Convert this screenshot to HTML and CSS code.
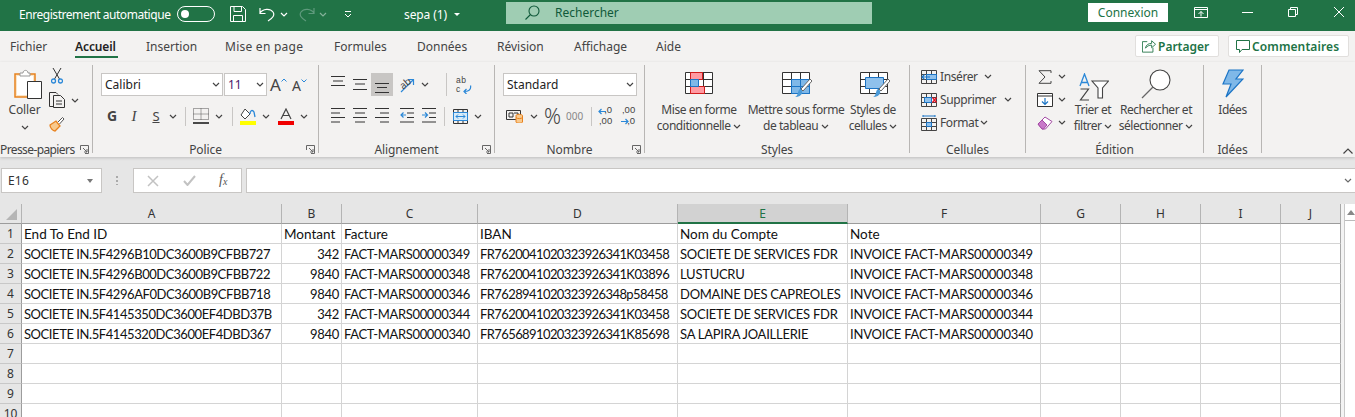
FILE: index.html
```html
<!DOCTYPE html>
<html lang="fr">
<head>
<meta charset="utf-8">
<title>sepa (1) - Excel</title>
<link rel="stylesheet" href="styles.css">
</head>
<body>
<svg class="defs" width="0" height="0" aria-hidden="true">
  <symbol id="c" viewBox="0 0 8 5"><path d="M1 1l3 3 3-3" fill="none" stroke="#444" stroke-width="1.2"/></symbol>
  <symbol id="launch" viewBox="0 0 9 9"><path d="M.5 5V.5H8.5V8.5H5M3 3l4 4M7 4V7H4" fill="none" stroke="#666"/></symbol>
</svg>

<header class="titlebar">
  <div class="tb-left">
    <span class="autosave">Enregistrement automatique</span>
    <span class="toggle"><span class="knob"></span></span>
    <svg class="ml15" width="16" height="16" viewBox="0 0 16 16"><path d="M.5.5H12.5L15.5 3.5V15.5H.5ZM4 .5V5.5H11.5V.5M3.5 15.5V9.5H12.5V15.5" fill="none" stroke="#fff"/></svg>
    <svg class="ml13" width="16" height="15" viewBox="0 0 16 15"><path d="M1 6C4 1.500 11 1 14 5c2 3 0 6-5 9M1 1V6.500H6.500" fill="none" stroke="#fff" stroke-width="1.200"/></svg>
    <svg class="chev ml5 white"><use href="#c"/></svg>
    <svg class="ml11" width="16" height="15" viewBox="0 0 16 15"><path d="M15 6C12 1.500 5 1 2 5c-2 3 0 6 5 9M15 1V6.500H9.500" fill="none" stroke="#5f9a7d" stroke-width="1.200"/></svg>
    <svg class="chev ml4 dim"><use href="#c"/></svg>
    <svg class="ml17" width="8" height="7" viewBox="0 0 8 7"><path d="M1 .5H7M1 3l3 3 3-3" fill="none" stroke="#fff"/></svg>
    <span class="docname">sepa (1)</span>
    <span class="caret"></span>
  </div>
  <div class="search">
    <svg width="15" height="15" viewBox="0 0 15 15"><circle cx="9" cy="6" r="5" fill="none" stroke="#10593a" stroke-width="1.100"/><path d="M5.500 9.500L.5 14.500" stroke="#10593a" stroke-width="1.100"/></svg>
    <span>Rechercher</span>
  </div>
  <button class="connect">Connexion</button>
  <div class="winctl">
    <svg width="14" height="11" viewBox="0 0 14 11"><path d="M.5.5H13.500V10.500H.5ZM.5 2.500H13.500M7 9.500V4.500M4.500 7L7 4.500 9.500 7" fill="none" stroke="#fff"/></svg>
    <svg class="ml34" width="11" height="1" viewBox="0 0 11 1"><path d="M0 .5H11" stroke="#fff"/></svg>
    <svg class="ml35" width="10" height="10" viewBox="0 0 10 10"><path d="M.5 2.500H7.500V9.500H.5ZM2.500 2.500V.5H9.500V7.500H7.500" fill="none" stroke="#fff"/></svg>
    <svg class="ml36" width="10" height="10" viewBox="0 0 10 10"><path d="M0 0L10 10M10 0L0 10" stroke="#fff"/></svg>
  </div>
</header>

<nav class="tabs">
  <a class="tab t1">Fichier</a>
  <a class="tab t2 active">Accueil</a>
  <a class="tab t3">Insertion</a>
  <a class="tab t4">Mise en page</a>
  <a class="tab t5">Formules</a>
  <a class="tab t6">Données</a>
  <a class="tab t7">Révision</a>
  <a class="tab t8">Affichage</a>
  <a class="tab t9">Aide</a>
  <div class="tab-actions">
    <button class="tabbtn share">
      <svg width="14" height="14" viewBox="0 0 16 15"><path d="M6 2.500H.5V14.500H12.500V9.500M4 10C4.500 6 7.500 4.500 11 4.500V1.500L15.500 5.500 11 9.500V6.500C8.500 6.500 5.500 7.500 4 10Z" fill="none" stroke="#217346"/></svg>
      Partager
    </button>
    <button class="tabbtn comment">
      <svg width="14" height="13" viewBox="0 0 14 13"><path d="M.5.5H13.500V9.500H6L3.500 12.500V9.500H.5Z" fill="none" stroke="#217346"/></svg>
      Commentaires
    </button>
  </div>
</nav>

<section class="ribbon">
  <div class="group g-clip">
    <div class="gbody clip-body">
      <div class="paste">
        <svg width="28" height="30" viewBox="0 0 28 30">
          <path d="M1 5H21V28H1Z" fill="#fbe5c8" stroke="#e8821e" stroke-width="1.500"/>
          <path d="M3 7H19V26H3Z" fill="#fff"/>
          <path d="M6 7V4H9C9 .5 14 .5 14 4H16V7Z" fill="#fff" stroke="#999"/>
          <path d="M13.500 12.500H27.500V29.500H13.500Z" fill="#fff" stroke="#333"/>
        </svg>
        <span class="lbl">Coller</span>
        <svg class="chev mt7"><use href="#c"/></svg>
      </div>
      <div class="clip-tools">
        <svg class="cut" width="12" height="16" viewBox="0 0 12 16"><path d="M2 0L8.500 11M10 0L3.500 11" stroke="#333" fill="none"/><circle cx="2.500" cy="13" r="2" fill="none" stroke="#2b88d8" stroke-width="1.300"/><circle cx="9.500" cy="13" r="2" fill="none" stroke="#2b88d8" stroke-width="1.300"/></svg>
        <div class="copy-row">
          <svg width="16" height="16" viewBox="0 0 16 16"><path d="M4.500 14.500H.5V.5H7L9 2.500M4.500 3.500H11.500L15.500 7.500V15.500H4.500ZM7 9H13M7 12H13" fill="none" stroke="#333"/></svg>
          <svg class="chev ml6"><use href="#c"/></svg>
        </div>
        <svg width="16" height="16" viewBox="0 0 16 16"><path d="M1 9L7 5 11 10 6 15C4 15 1 12 1 9Z" fill="#f8c98d" stroke="#e8821e" stroke-width="1.300"/><path d="M9 6L13.500 1.500 15 3 10.500 8" fill="#fff" stroke="#555"/></svg>
      </div>
    </div>
    <div class="glabel clip-label">Presse-papiers<svg class="launch"><use href="#launch"/></svg></div>
  </div>

  <div class="group g-font">
    <div class="gbody">
      <div class="row r1">
        <div class="combo w122"><span>Calibri</span><svg class="chev"><use href="#c"/></svg></div>
        <div class="combo w43 ml1 violet"><span>11</span><svg class="chev"><use href="#c"/></svg></div>
        <span class="growA ml3">A<svg class="mini" width="6" height="4" viewBox="0 0 6 4"><path d="M.5 3.500L3 1 5.500 3.500" fill="none" stroke="#2b88d8"/></svg></span>
        <span class="shrinkA ml5">A<svg class="mini" width="6" height="4" viewBox="0 0 6 4"><path d="M.5.5L3 3 5.500.5" fill="none" stroke="#2b88d8"/></svg></span>
      </div>
      <div class="row r2">
        <span class="fmt bold">G</span>
        <span class="fmt ital">I</span>
        <span class="fmt under">S</span>
        <svg class="chev slot13"><use href="#c"/></svg>
        <span class="vsep ml6"></span>
        <svg class="ml7" width="16" height="16" viewBox="0 0 16 16"><path d="M.5.5H15.500V11.500H.5ZM8 .5V11.500M.5 6H15.500" fill="none" stroke="#555" stroke-dasharray="1 1"/><path d="M0 15H16" stroke="#111" stroke-width="1.500"/></svg>
        <svg class="chev ml6"><use href="#c"/></svg>
        <span class="vsep ml9"></span>
        <svg class="ml7" width="16" height="17" viewBox="0 0 16 17"><path d="M5 1L10 6 5 11 1 7Z" fill="#fff" stroke="#444"/><path d="M10 6C10 3 12 1 14 4L15 9" fill="none" stroke="#2b88d8" stroke-width="1.300"/><path d="M0 13H16V17H0Z" fill="#ffff00"/></svg>
        <svg class="chev ml6"><use href="#c"/></svg>
        <svg class="ml8" width="16" height="17" viewBox="0 0 16 17"><path d="M3 11L8 1 13 11M5 7.500H11" fill="none" stroke="#444" stroke-width="1.200"/><path d="M0 13H16V17H0Z" fill="#f00000"/></svg>
        <svg class="chev ml6"><use href="#c"/></svg>
      </div>
    </div>
    <div class="glabel">Police<svg class="launch"><use href="#launch"/></svg></div>
  </div>

  <div class="group g-align">
    <div class="gbody">
      <div class="row r1">
        <svg width="14" height="23" viewBox="0 0 14 23"><path d="M0 3.500H14M2 8H12M0 12.500H14" stroke="#333"/></svg>
        <svg class="ml8" width="14" height="23" viewBox="0 0 14 23"><path d="M0 6.500H14M2 11H12M0 16.500H14" stroke="#333"/></svg>
        <span class="pressed ml4"><svg width="14" height="23" viewBox="0 0 14 23"><path d="M0 10.500H14M2 14.500H12M0 19.500H14" stroke="#333"/></svg></span>
        <span class="orient ml6"><span class="orient-ab">ab</span><svg width="16" height="16" viewBox="0 0 16 16"><path d="M2 15L14 3M9 2.500H14.500V8" fill="none" stroke="#2b88d8" stroke-width="1.200"/></svg></span>
        <svg class="chev ml6"><use href="#c"/></svg>
        <span class="vsep tall ml17"></span>
        <span class="wrap ml9"><span class="wrap-txt">ab</span><span class="wrap-txt">c</span><svg width="9" height="9" viewBox="0 0 9 9"><path d="M7.500 .5C8.500 5 5 6.500 1 6.500M3.500 4L1 6.500 3.500 9" fill="none" stroke="#2b88d8" stroke-width="1.200"/></svg></span>
      </div>
      <div class="row r2">
        <svg width="14" height="22" viewBox="0 0 14 22"><path d="M0 3.500H14M0 8H9M0 12.500H14M0 17H9" stroke="#333"/></svg>
        <svg class="ml8" width="14" height="22" viewBox="0 0 14 22"><path d="M0 3.500H14M2 8H12M0 12.500H14M2 17H12" stroke="#333"/></svg>
        <svg class="ml8" width="14" height="22" viewBox="0 0 14 22"><path d="M0 3.500H14M5 8H14M0 12.500H14M5 17H14" stroke="#333"/></svg>
        <svg class="ml11" width="14" height="22" viewBox="0 0 14 22"><path d="M0 3.500H14M7 8H14M7 12.500H14M0 17H14" stroke="#333"/><path d="M6 10H1M3.500 7.500L1 10 3.500 12.500" fill="none" stroke="#2b88d8" stroke-width="1.200"/></svg>
        <svg class="ml8" width="14" height="22" viewBox="0 0 14 22"><path d="M0 3.500H14M7 8H14M7 12.500H14M0 17H14" stroke="#333"/><path d="M0 10H5M3 7.500L5.500 10 3 12.500" fill="none" stroke="#2b88d8" stroke-width="1.200"/></svg>
        <span class="vsep ml8"></span>
        <svg class="ml8" width="15" height="15" viewBox="0 0 15 15"><path d="M.5.5H14.500V14.500H.5ZM5 .5V3M10 .5V3M5 12V14.500M10 12V14.500" fill="none" stroke="#333"/><path d="M.5 3.500H14.500V11.500H.5Z" fill="#d7ebf8" stroke="#2b88d8"/><path d="M3 7.500H12M5 5.500L3 7.500 5 9.500M10 5.500L12 7.500 10 9.500" fill="none" stroke="#2b88d8"/></svg>
        <svg class="chev ml6"><use href="#c"/></svg>
      </div>
    </div>
    <div class="glabel">Alignement<svg class="launch"><use href="#launch"/></svg></div>
  </div>

  <div class="group g-num">
    <div class="gbody">
      <div class="row r1">
        <div class="combo w134"><span>Standard</span><svg class="chev"><use href="#c"/></svg></div>
      </div>
      <div class="row r2">
        <svg class="ml3" width="17" height="14" viewBox="0 0 17 14"><path d="M.5 1.500H14.500V10.500H.5ZM3 4H7V8H3ZM8 4H12V8" fill="none" stroke="#333"/><path d="M10 6.500C10 5 16.500 5 16.500 6.500V13C16.500 14.500 10 14.500 10 13Z" fill="#f8c98d" stroke="#e8821e"/><path d="M10 8.500C11 10 15.500 10 16.500 8.500" fill="none" stroke="#e8821e"/></svg>
        <svg class="chev ml7"><use href="#c"/></svg>
        <span class="pct ml6">%</span>
        <span class="thou">000</span>
        <span class="vsep ml8"></span>
        <span class="decs ml6"><span class="dec-a">,0</span><span class="dec-b">,00</span><svg class="dec-arrow" width="8" height="7" viewBox="0 0 8 7"><path d="M8 3.500H1M3.500 1L1 3.500 3.500 6" fill="none" stroke="#2b88d8" stroke-width="1.200"/></svg></span>
        <span class="decs ml9"><span class="dec-a">,00</span><span class="dec-b">,0</span><svg class="dec-arrow lower" width="8" height="7" viewBox="0 0 8 7"><path d="M0 3.500H7M4.500 1L7 3.500 4.500 6" fill="none" stroke="#2b88d8" stroke-width="1.200"/></svg></span>
      </div>
    </div>
    <div class="glabel">Nombre<svg class="launch"><use href="#launch"/></svg></div>
  </div>

  <div class="group g-styles">
    <div class="gbody flexrow">
      <div class="big w94">
        <span class="bigicon"><svg width="28" height="22" viewBox="0 0 28 22"><path d="M.5.5H27.500V21.500H.5ZM.5 7.500H27.500M.5 14.500H27.500M9.500.5V21.500M18.500.5V21.500" fill="#fff" stroke="#333"/><path d="M5.500.5H17.500V7.500H5.500ZM5.500 14.500H19.500V21.500H5.500Z" fill="#ff9aa2" stroke="#d01c1c"/><path d="M5.500 7.500H13.500V14.500H5.500Z" fill="#7fb8e8" stroke="#1b74c5"/></svg></span>
        <span class="lbl">Mise en forme</span>
        <span class="lbl">conditionnelle <svg class="chev"><use href="#c"/></svg></span>
      </div>
      <div class="big w100">
        <span class="bigicon shift2"><svg width="30" height="26" viewBox="0 0 30 26"><path d="M.5.5H27.500V21.500H.5ZM.5 7.500H27.500M.5 14.500H27.500M9.500.5V21.500M18.500.5V21.500" fill="#fff" stroke="#333"/><path d="M9.500 7.500H27.500V21.500H9.500Z" fill="#7fb8e8" stroke="#1b74c5"/><path d="M18.500 7.500V21.500M9.500 14.500H27.500" stroke="#1b74c5"/><path d="M19 17L28 7 30 9 21 19Z" fill="#fff" stroke="#666"/><path d="M18 17C22 18 21 25 13 25 17 23 15 19 18 17Z" fill="#4a9ad8"/></svg></span>
        <span class="lbl">Mettre sous forme</span>
        <span class="lbl">de tableau <svg class="chev"><use href="#c"/></svg></span>
      </div>
      <div class="big w54">
        <span class="bigicon shift4"><svg width="30" height="26" viewBox="0 0 30 26"><path d="M.5.5H27.500V21.500H.5ZM.5 7.500H27.500M.5 14.500H27.500M9.500.5V21.500M18.500.5V21.500" fill="#fff" stroke="#333"/><path d="M5.500 5.500H23.500V16.500H5.500Z" fill="#8fc1ec" stroke="#1b74c5"/><path d="M19 17L28 7 30 9 21 19Z" fill="#fff" stroke="#666"/><path d="M18 17C22 18 21 25 13 25 17 23 15 19 18 17Z" fill="#4a9ad8"/></svg></span>
        <span class="lbl">Styles de</span>
        <span class="lbl">cellules <svg class="chev"><use href="#c"/></svg></span>
      </div>
    </div>
    <div class="glabel">Styles</div>
  </div>

  <div class="group g-cells">
    <div class="gbody">
      <div class="cellrow">
        <svg width="16" height="14" viewBox="0 0 16 14"><path d="M.5.5H15.500V13.500H.5ZM.5 4.500H15.500M.5 9.500H15.500M5.500.5V13.500M10.500.5V13.500" fill="none" stroke="#444"/><path d="M5.500 4.500H15.500V9.500H5.500Z" fill="#8fc1ec" stroke="#1b74c5"/><path d="M9 7H1M3.500 4.500L1 7 3.500 9.500" fill="none" stroke="#1b74c5" stroke-width="1.200"/></svg>
        <span class="lbl i1">Insérer</span><svg class="chev"><use href="#c"/></svg>
      </div>
      <div class="cellrow">
        <svg width="16" height="14" viewBox="0 0 16 14"><path d="M.5.5H15.500V13.500H.5ZM.5 4.500H15.500M.5 9.500H15.500M5.500.5V13.500M10.500.5V13.500" fill="none" stroke="#444"/><path d="M3.500 4.500H10.500V9.500H3.500Z" fill="#8fc1ec" stroke="#1b74c5"/><path d="M11.500 4.500L15.500 9.500M15.500 4.500L11.500 9.500" stroke="#e81123" stroke-width="1.300"/></svg>
        <span class="lbl i2">Supprimer</span><svg class="chev"><use href="#c"/></svg>
      </div>
      <div class="cellrow">
        <svg width="16" height="16" viewBox="0 0 16 16"><path d="M.5 3.500H15.500V15.500H.5ZM.5 7.500H15.500M.5 11.500H15.500M5.500 3.500V15.500M10.500 3.500V15.500" fill="none" stroke="#444"/><path d="M5.500 7.500H10.500V11.500H5.500Z" fill="#8fc1ec" stroke="#1b74c5"/><path d="M2 1H14M2 0V2M14 0V2" stroke="#1b74c5"/></svg>
        <span class="lbl i3">Format</span><svg class="chev"><use href="#c"/></svg>
      </div>
    </div>
    <div class="glabel">Cellules</div>
  </div>

  <div class="group g-edit">
    <div class="gbody flexrow">
      <div class="edit-col">
        <div class="editrow"><svg class="ml1" width="14" height="14" viewBox="0 0 14 14"><path d="M13 3V.7H1L7 7 1 13.300H13V11" fill="none" stroke="#444"/></svg><svg class="chev ml6"><use href="#c"/></svg></div>
        <div class="editrow"><svg width="16" height="14" viewBox="0 0 16 14"><path d="M.5.5H15.500V13.500H.5ZM.5 3H15.500" fill="#fff" stroke="#333"/><path d="M8 5V11.500M5 8.500L8 11.500 11 8.500" fill="none" stroke="#1b74c5" stroke-width="1.200"/></svg><svg class="chev ml5"><use href="#c"/></svg></div>
        <div class="editrow"><svg width="16" height="14" viewBox="0 0 16 14"><path d="M1 8L8 1 15 5.500 8.500 13 5 13Z" fill="#fff" stroke="#a349a4"/><path d="M1 8L5 4 10 9 6.500 13H5Z" fill="#c879c9" stroke="#a349a4"/></svg><svg class="chev ml5"><use href="#c"/></svg></div>
      </div>
      <div class="big w38">
        <span class="bigicon sort"><svg width="30" height="28" viewBox="0 0 30 28"><path d="M1 13L5.500 1 10 13M2.500 9.500H8.500" fill="none" stroke="#2b88d8" stroke-width="1.300"/><path d="M1.500 16H9.500L1.500 27H10" fill="none" stroke="#444" stroke-width="1.200"/><path d="M13 8H29.500L23.500 15V25H19V15Z" fill="#fff" stroke="#444" stroke-width="1.100"/></svg></span>
        <span class="lbl">Trier et</span>
        <span class="lbl">filtrer <svg class="chev"><use href="#c"/></svg></span>
      </div>
      <div class="big w80">
        <span class="bigicon search-big"><svg width="30" height="30" viewBox="0 0 30 30"><circle cx="19" cy="11" r="10" fill="#fff" stroke="#444" stroke-width="1.100"/><path d="M12 18L1 29" stroke="#666" stroke-width="1.200"/></svg></span>
        <span class="lbl">Rechercher et</span>
        <span class="lbl">sélectionner <svg class="chev"><use href="#c"/></svg></span>
      </div>
    </div>
    <div class="glabel">Édition</div>
  </div>

  <div class="group g-ideas">
    <div class="gbody">
      <div class="big wfull">
        <span class="bigicon search-big"><svg width="22" height="29" viewBox="0 0 22 29"><path d="M7 1H21L14 10H21L4 28 9 15H1Z" fill="#7fb8e8" stroke="#1b74c5" stroke-width="1.200"/></svg></span>
        <span class="lbl">Idées</span>
      </div>
    </div>
    <div class="glabel">Idées</div>
  </div>

  <svg class="collapse" width="10" height="6" viewBox="0 0 10 6"><path d="M.5 5.500L5 1 9.500 5.500" fill="none" stroke="#444" stroke-width="1.200"/></svg>
</section>

<div class="formula">
  <div class="namebox"><span>E16</span><span class="nb-caret"></span></div>
  <span class="dots"></span>
  <div class="fx-box">
    <svg width="12" height="12" viewBox="0 0 12 12"><path d="M1 1L11 11M11 1L1 11" stroke="#c2c2c2" stroke-width="1.500"/></svg>
    <svg width="13" height="11" viewBox="0 0 13 11"><path d="M1 6L4.500 10 12 1" fill="none" stroke="#c2c2c2" stroke-width="2"/></svg>
    <span class="fx">f<sub>x</sub></span>
  </div>
  <div class="fx-input"><svg class="chev fx-chev"><use href="#c"/></svg></div>
</div>

<main class="sheet">
  <div class="gridwrap">
    <table class="grid">
      <colgroup><col class="c0"><col class="ca"><col class="cb"><col class="cc"><col class="cd"><col class="ce"><col class="cf"><col class="cg"><col class="cg"><col class="cg"><col class="cj"></colgroup>
      <thead>
        <tr><th class="corner"><span class="tri"></span></th><th>A</th><th>B</th><th>C</th><th>D</th><th class="sel">E</th><th>F</th><th>G</th><th>H</th><th>I</th><th>J</th></tr>
      </thead>
      <tbody>
        <tr><th>1</th><td>End To End ID</td><td>Montant</td><td>Facture</td><td>IBAN</td><td>Nom du Compte</td><td>Note</td><td></td><td></td><td></td><td></td></tr>
        <tr class="data"><th>2</th><td>SOCIETE IN.5F4296B10DC3600B9CFBB727</td><td class="num">342</td><td>FACT-MARS00000349</td><td>FR7620041020323926341K03458</td><td>SOCIETE DE SERVICES FDR</td><td>INVOICE FACT-MARS00000349</td><td></td><td></td><td></td><td></td></tr>
        <tr class="data"><th>3</th><td>SOCIETE IN.5F4296B00DC3600B9CFBB722</td><td class="num">9840</td><td>FACT-MARS00000348</td><td>FR7620041020323926341K03896</td><td>LUSTUCRU</td><td>INVOICE FACT-MARS00000348</td><td></td><td></td><td></td><td></td></tr>
        <tr class="data"><th>4</th><td>SOCIETE IN.5F4296AF0DC3600B9CFBB718</td><td class="num">9840</td><td>FACT-MARS00000346</td><td>FR7628941020323926348p58458</td><td>DOMAINE DES CAPREOLES</td><td>INVOICE FACT-MARS00000346</td><td></td><td></td><td></td><td></td></tr>
        <tr class="data"><th>5</th><td>SOCIETE IN.5F4145350DC3600EF4DBD37B</td><td class="num">342</td><td>FACT-MARS00000344</td><td>FR7620041020323926341K03458</td><td>SOCIETE DE SERVICES FDR</td><td>INVOICE FACT-MARS00000344</td><td></td><td></td><td></td><td></td></tr>
        <tr class="data"><th>6</th><td>SOCIETE IN.5F4145320DC3600EF4DBD367</td><td class="num">9840</td><td>FACT-MARS00000340</td><td>FR7656891020323926341K85698</td><td>SA LAPIRA JOAILLERIE</td><td>INVOICE FACT-MARS00000340</td><td></td><td></td><td></td><td></td></tr>
        <tr><th>7</th><td></td><td></td><td></td><td></td><td></td><td></td><td></td><td></td><td></td><td></td></tr>
        <tr><th>8</th><td></td><td></td><td></td><td></td><td></td><td></td><td></td><td></td><td></td><td></td></tr>
        <tr><th>9</th><td></td><td></td><td></td><td></td><td></td><td></td><td></td><td></td><td></td><td></td></tr>
        <tr><th>10</th><td></td><td></td><td></td><td></td><td></td><td></td><td></td><td></td><td></td><td></td></tr>
      </tbody>
    </table>
  </div>
  <aside class="vscroll"><span class="up"></span></aside>
</main>
</body>
</html>
```
FILE: styles.css
```css
* { box-sizing: border-box; }
html, body { margin: 0; padding: 0; }
body {
  width: 1355px; height: 417px; overflow: hidden;
  font-family: "Noto Sans", "Open Sans", sans-serif;
  font-size: 12px; color: #444; background: #e6e6e6;
  display: flex; flex-direction: column;
}
svg { display: block; flex: none; }
.defs { position: absolute; }
button { font: inherit; margin: 0; }

.ml1 { margin-left: 1px; } .ml3 { margin-left: 3px; } .ml4 { margin-left: 4px; }
.ml5 { margin-left: 5px; } .ml6 { margin-left: 6px; } .ml7 { margin-left: 7px; }
.ml8 { margin-left: 8px; } .ml9 { margin-left: 9px; } .ml10 { margin-left: 10px; }
.ml11 { margin-left: 11px; } .ml13 { margin-left: 13px; } .ml15 { margin-left: 15px; }
.ml17 { margin-left: 17px; } .ml34 { margin-left: 34px; } .ml35 { margin-left: 35px; } .ml36 { margin-left: 36px; }
.mt7 { margin-top: 7px; }

.chev { width: 8px; height: 5px; display: inline-block; vertical-align: middle; }
.white { filter: brightness(0) invert(1); }
.dim { opacity: .45; filter: brightness(0) invert(1); }

/* title bar */
.titlebar {
  height: 31px; flex: none; background: #217346; color: #fff;
  display: flex; align-items: center; padding-left: 19px;
}
.tb-left { width: 487px; display: flex; align-items: center; padding-bottom: 3px; }
.autosave { width: 158px; white-space: nowrap; letter-spacing: -.45px; }
.toggle {
  width: 38px; height: 16px; border: 1px solid #fff; border-radius: 8px;
  display: flex; align-items: center; padding-left: 3px;
}
.knob { width: 8px; height: 8px; background: #fff; border-radius: 50%; }
.docname { margin-left: 52px; letter-spacing: -.1px; white-space: nowrap; }
.caret { margin-left: 7px; border: 3px solid transparent; border-top: 3px solid #fff; border-bottom: 0; width: 0; height: 0; }
.search {
  width: 366px; height: 22px; margin-bottom: 6px; background: #9fcdb3; color: #10593a;
  display: flex; align-items: center; padding-left: 19px; gap: 15px;
}
.connect {
  width: 80px; height: 19px; margin: 0 0 7px 216px; padding: 0;
  background: #fff; color: #217346; border: 0;
}
.winctl { display: flex; align-items: center; margin-left: 26px; padding-bottom: 7px; }

/* tabs */
.tabs { height: 31px; flex: none; background: #f3f2f1; display: flex; position: relative; }
.tab { display: block; height: 31px; line-height: 31px; white-space: nowrap; flex: none; color: #444; }
.t1 { margin-left: 10px; width: 65px; }
.t2 { width: 71px; }
.t3 { width: 79px; }
.t4 { width: 109px; letter-spacing: .25px; }
.t5 { width: 83px; }
.t6 { width: 80px; }
.t7 { width: 77px; }
.t8 { width: 82px; }
.t9 { width: 50px; }
.active { font-weight: 600; color: #222; letter-spacing: -.1px; position: relative; }
.active::after {
  content: ""; position: absolute; left: 0; top: 25px; width: 43px; height: 2px; background: #217346;
}
.tab-actions { margin-left: 429px; display: flex; gap: 9px; padding-top: 4px; }
.tabbtn {
  height: 22px; background: #fff; border: 1px solid #e1dfdd; border-radius: 2px; color: #217346;
  font-weight: 600; display: flex; align-items: center; padding: 0; white-space: nowrap;
}
.share { width: 84px; padding-left: 6px; gap: 2px; }
.comment { width: 121px; padding-left: 7px; gap: 2px; letter-spacing: .1px; }

/* ribbon */
.ribbon {
  height: 95px; flex: none; background: #f3f2f1; display: flex; padding-top: 3px; position: relative;
  box-shadow: 0 1px 3px rgba(0,0,0,.18);
}
.group { height: 88px; display: flex; flex-direction: column; border-right: 1px solid #b8b6b4; flex: none; position: relative; }
.gbody { height: 76px; flex: none; }
.flexrow { display: flex; }
.glabel { height: 12px; line-height: 17px; text-align: center; white-space: nowrap; letter-spacing: -.1px; position: relative; color: #444; }
.launch { position: absolute; right: 3px; top: 4px; width: 9px; height: 9px; }
.lbl { white-space: nowrap; line-height: 16px; color: #444; letter-spacing: -.46px; }
.g-clip { width: 93px; }
.g-font { width: 226px; padding-left: 8px; }
.g-align { width: 176px; padding-left: 12px; }
.g-num { width: 150px; padding-left: 8px; }
.g-styles { width: 265px; padding-left: 7px; }
.g-cells { width: 116px; padding-left: 11px; }
.g-edit { width: 178px; padding-left: 11px; }
.g-ideas { width: 58px; }
.g-font .glabel, .g-align .glabel, .g-num .glabel { margin-left: -8px; }
.g-align .glabel { margin-left: -12px; }
.g-styles .glabel { margin-left: -7px; }
.g-cells .glabel, .g-edit .glabel { margin-left: -11px; }

.clip-body { display: flex; }
.paste { width: 37px; margin-left: 6px; display: flex; flex-direction: column; align-items: center; padding-top: 4px; }
.paste svg:first-child { margin-left: 7px; }
.paste .lbl { margin-top: 3px; letter-spacing: -.1px; }
.clip-tools { margin-left: 6px; display: flex; flex-direction: column; padding-top: 3px; }
.cut { margin-left: 2px; }
.copy-row { display: flex; align-items: center; margin: 8px 0 8px; }
.clip-label { text-align: left; letter-spacing: -.6px; }

.row { display: flex; align-items: center; }
.r1 { height: 23px; margin-top: 8px; }
.r2 { height: 22px; margin-top: 9px; }
.combo {
  height: 23px; background: #fff; border: 1px solid #c8c6c4; display: flex; align-items: center;
  justify-content: space-between; padding: 0 2px 0 3px; color: #222; font-size: 12px;
}
.w122 { width: 122px; } .w43 { width: 43px; } .w134 { width: 134px; }
.violet { color: #4b1a6a; }
.growA { font-size: 17px; width: 17px; display: flex; color: #444; line-height: 20px; }
.shrinkA { font-size: 14px; width: 16px; margin-top: 2px; display: flex; color: #444; line-height: 20px; }
.mini { margin-top: 3px; }
.fmt { width: 22px; text-align: center; font-size: 14px; color: #444; line-height: 22px; }
.bold { font-weight: 700; }
.ital { font-style: italic; font-family: "Liberation Serif", serif; font-size: 15px; }
.under { text-decoration: underline; font-size: 13px; }
.slot13 { margin: 0 2px; }
.vsep { width: 1px; height: 19px; background: #c8c6c4; flex: none; }
.vsep.tall { height: 23px; }
.pressed { width: 22px; height: 23px; background: #c8c6c4; display: flex; justify-content: center; }
.orient { width: 16px; height: 16px; position: relative; display: block; }
.orient-ab {
  position: absolute; left: 0; top: 0; font-size: 10px; line-height: 12px; color: #444;
  transform: rotate(-40deg);
}
.wrap { width: 16px; height: 18px; position: relative; display: block; }
.wrap-txt { display: block; font-family: "Liberation Sans", sans-serif; font-size: 8.500px; line-height: 9px; color: #444; letter-spacing: .6px; }
.wrap svg { position: absolute; right: 0; top: 9px; }
.pct { font-size: 21px; color: #444; width: 22px; line-height: 22px; font-weight: 300; }
.thou { font-size: 10px; color: #888; }
.decs { width: 14px; height: 22px; position: relative; display: block; font-family: "Liberation Sans", sans-serif; font-size: 9.500px; line-height: 10px; color: #444; }
.dec-a, .dec-b { position: absolute; right: 0; }
.dec-a { top: 0; }
.dec-b { top: 11px; }
.dec-arrow { position: absolute; left: 0; top: 3px; }
.dec-arrow.lower { top: 13px; }

.big { display: flex; flex-direction: column; align-items: center; flex: none; }
.w94 { width: 94px; } .w100 { width: 100px; } .w54 { width: 54px; }
.w38 { width: 38px; } .w80 { width: 80px; margin-left: 4px; } .wfull { width: 57px; }
.bigicon { height: 37px; padding-top: 7px; display: block; }
.shift2 { margin-left: 2px; }
.shift4 { margin-left: 4px; }
.bigicon.sort { padding-top: 8px; margin-left: 2px; }
.bigicon.search-big { padding-top: 4px; }

.cellrow { height: 23px; display: flex; align-items: center; }
.cellrow .lbl { margin-left: 3px; letter-spacing: -.4px; }
.i1 { width: 44px; } .i2 { width: 64px; } .i3 { width: 40px; }
.edit-col { width: 37px; }
.editrow { height: 23px; display: flex; align-items: center; white-space: nowrap; width: 37px; }
.collapse { position: absolute; right: 2px; top: 86px; }

/* formula bar */
.formula {
  height: 47px; flex: none; display: flex; padding: 11px 0 11px 1px; background: #e6e6e6;
}
.namebox {
  width: 101px; height: 25px; background: #fff; border: 1px solid #c8c6c4; color: #333;
  display: flex; align-items: center; justify-content: space-between; padding: 0 8px 0 6px; letter-spacing: .2px;
}
.nb-caret { border: 3.500px solid transparent; border-top: 4px solid #777; border-bottom: 0; }
.dots {
  width: 2px; height: 10px; margin: 7px 15px 0 14px;
  background-image: radial-gradient(circle, #aaa 1px, transparent 1px); background-size: 2px 4px;
}
.fx-box {
  width: 109px; height: 25px; background: #fff; border: 1px solid #c8c6c4;
  display: flex; align-items: center; padding-left: 13px; gap: 24px;
}
.fx { font-family: "Liberation Serif", serif; font-style: italic; font-size: 14px; color: #555; line-height: 12px; margin-left: -1px; }
.fx sub { font-size: 10px; vertical-align: -1px; }
.fx-input {
  flex: 1; height: 25px; margin-left: 4px; background: #fff; border: 1px solid #c8c6c4; border-right: 0;
  display: flex; align-items: center; justify-content: flex-end; padding-right: 3px;
}
.fx-chev { opacity: .8; }

/* sheet */
.sheet { flex: 1; min-height: 0; display: flex; overflow: hidden; background: #f3f3f3; }
.gridwrap { width: 1344px; flex: none; overflow: hidden; }
.grid {
  table-layout: fixed; border-collapse: separate; border-spacing: 0; width: 1341px;
  font-family: Lato, "Liberation Sans", sans-serif; font-size: 13.500px; color: #111;
}
.c0 { width: 22px; } .ca { width: 260px; } .cb { width: 60px; } .cc { width: 136px; }
.cd { width: 200px; } .ce { width: 170px; } .cf { width: 193px; } .cg { width: 80px; } .cj { width: 60px; }
.grid th, .grid td { height: 20px; padding: 0; white-space: nowrap; overflow: hidden; }
.grid th {
  font-weight: 400; background: #e6e6e6; text-align: center; color: #333;
  font-family: "Noto Sans", sans-serif; font-size: 12px;
}
.grid thead th { border-right: 1px solid #b4b4b4; border-bottom: 1px solid #9c9c9c; }
.grid tbody th { border-right: 1px solid #9c9c9c; border-bottom: 1px solid #c8c8c8; }
.grid thead th.sel { background: #d2d2d2; border-bottom: 2px solid #217346; color: #217346; }
.grid thead th.corner { position: relative; }
.tri {
  position: absolute; left: 6px; top: 5px; width: 0; height: 0;
  border-left: 11px solid transparent; border-bottom: 11px solid #b5b5b5;
}
.grid td {
  background: #fff; border-right: 1px solid #d4d4d4; border-bottom: 1px solid #d4d4d4;
  padding-left: 2px; overflow: visible;
}
.grid .data td { font-size: 13px; }
.grid .data td:nth-child(2) { letter-spacing: -.43px; }
.grid .data td:nth-child(3) { letter-spacing: -.3px; }
.grid .data td:nth-child(4) { letter-spacing: -.35px; }
.grid .data td:nth-child(5) { letter-spacing: -.59px; }
.grid .data td:nth-child(6) { letter-spacing: -.25px; }
.grid .data td:nth-child(7) { letter-spacing: -.19px; }
.grid td:last-child, .grid thead th:last-child { border-right: 1px solid #a8a8a8; }
.grid td.num { text-align: right; padding: 0 2px 0 0; }
.vscroll { width: 11px; flex: none; background: #fff; border-left: 1px solid #c8c8c8; }
.up { display: block; height: 17px; background: #fff; border-bottom: 1px solid #bbb; position: relative; }
.up::after {
  content: ""; position: absolute; left: 2px; top: 6px;
  border: 4px solid transparent; border-bottom: 5px solid #888; border-top: 0;
}
```
